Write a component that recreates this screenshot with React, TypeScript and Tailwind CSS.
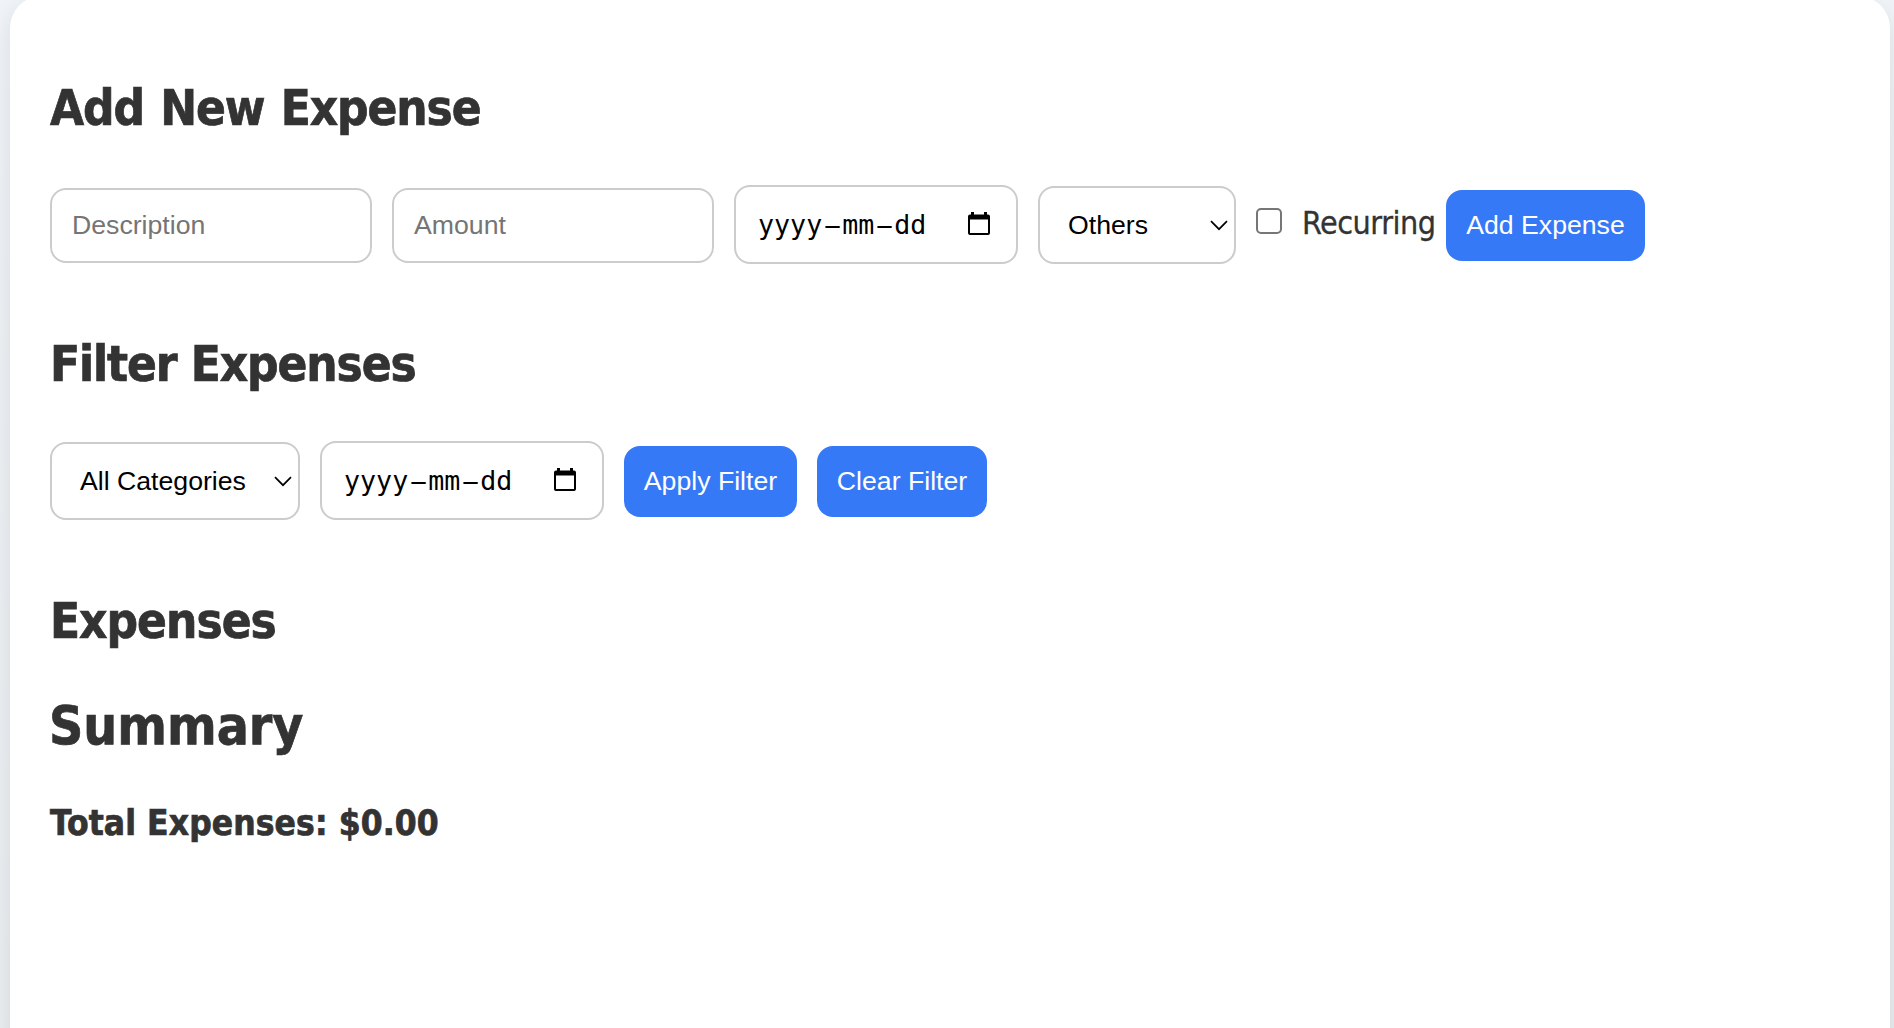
import type { ReactNode } from "react";

const field = "flex items-center rounded-[16px] border-2 border-[#ccc] bg-white text-[26.67px] leading-[31px] whitespace-nowrap";
const button = "mt-[2px] flex h-[71px] items-center justify-center rounded-[16px] bg-[#3579f7] text-[26.67px] leading-[31px] whitespace-nowrap text-white";
const heading = "h-[64px] font-['DejaVu_Sans_Condensed','DejaVu_Sans',sans-serif] leading-[64px] font-bold whitespace-nowrap text-[#333] [-webkit-text-stroke:0.7px_#333]";

function Chevron() {
  return (
    <svg width="18" height="11" viewBox="0 0 18 11" fill="none" stroke="#000" strokeWidth="1.7" className="mt-px">
      <path d="M1 1.200 9 9.200 17 1.200" />
    </svg>
  );
}

function Separator() {
  return <span className="mx-[5.57px] inline-block w-[8.87px] scale-x-[2.2] font-['Liberation_Sans',Arial,sans-serif]">-</span>;
}

function DateField() {
  return (
    <div className={`${field} h-[79px] w-[284px] justify-between pr-[26.5px] pl-[22px]`}>
      <span className="font-['DejaVu_Sans_Mono',monospace]">
        yyyy<Separator />mm<Separator />dd
      </span>
      <svg width="22" height="24" viewBox="0 0 22 24" className="-mt-[2px]">
        <path fillRule="evenodd" d="M3 0h3v2.500h10V0h3v2.500h1a2 2 0 0 1 2 2V21a2 2 0 0 1-2 2H2a2 2 0 0 1-2-2V4.500a2 2 0 0 1 2-2h1zM2 7.500V21h18V7.500z" />
      </svg>
    </div>
  );
}

function SelectField({ children, className }: { children: ReactNode; className: string }) {
  return (
    <div className={`${field} mt-px h-[78px] justify-between pr-[6px] pl-[28px] ${className}`}>
      <span>{children}</span>
      <Chevron />
    </div>
  );
}

export default function App() {
  return (
    <div className="h-[1028px] overflow-hidden bg-linear-to-b from-[#f0f4f8] to-[#eaeef1] pr-1 pl-[10px] font-['Liberation_Sans',Arial,sans-serif] text-black">
      <main className="-mt-1 h-[1080px] rounded-[32px] bg-white px-10 pt-[81px] shadow-[0_8px_24px_rgba(0,0,0,0.1)]">
        <h2 className={`${heading} text-[49px] tracking-[-1.1px] [word-spacing:2px]`}>Add New Expense</h2>
        <div className="mt-[44px] flex h-[79px] items-center">
          <div className={`${field} mt-[2px] mr-5 h-[75px] w-[322px] pl-5 text-[#757575]`}>Description</div>
          <div className={`${field} mt-[2px] mr-5 h-[75px] w-[322px] pl-5 text-[#757575]`}>Amount</div>
          <DateField />
          <SelectField className="mr-5 ml-5 w-[198px]">Others</SelectField>
          <div className="mb-[7px] size-[26px] rounded-[5px] border-2 border-[#767676] bg-white" />
          <span className="ml-[20px] w-[144px] pb-[4px] font-['DejaVu_Sans_Condensed','DejaVu_Sans',sans-serif] text-[32px] leading-[40px] tracking-[-0.5px] whitespace-nowrap text-[#333] [-webkit-text-stroke:0.3px_#333]">Recurring</span>
          <div className={`${button} w-[199px]`}>Add Expense</div>
        </div>
        <h2 className={`${heading} mt-[69px] text-[49px] tracking-[-1.1px]`}>Filter Expenses</h2>
        <div className="mt-[44px] flex h-[79px] items-center gap-5">
          <SelectField className="w-[250px]">All Categories</SelectField>
          <DateField />
          <div className={`${button} w-[173px]`}>Apply Filter</div>
          <div className={`${button} w-[170px]`}>Clear Filter</div>
        </div>
        <h2 className={`${heading} mt-[70px] text-[49px] tracking-[-1px]`}>Expenses</h2>
        <h2 className={`${heading} -ml-px mt-[40px] text-[53px]`}>Summary</h2>
        <h3 className={`${heading} mt-[33px] text-[35px] tracking-[0.1px]`}>Total Expenses: $0.00</h3>
      </main>
    </div>
  );
}
